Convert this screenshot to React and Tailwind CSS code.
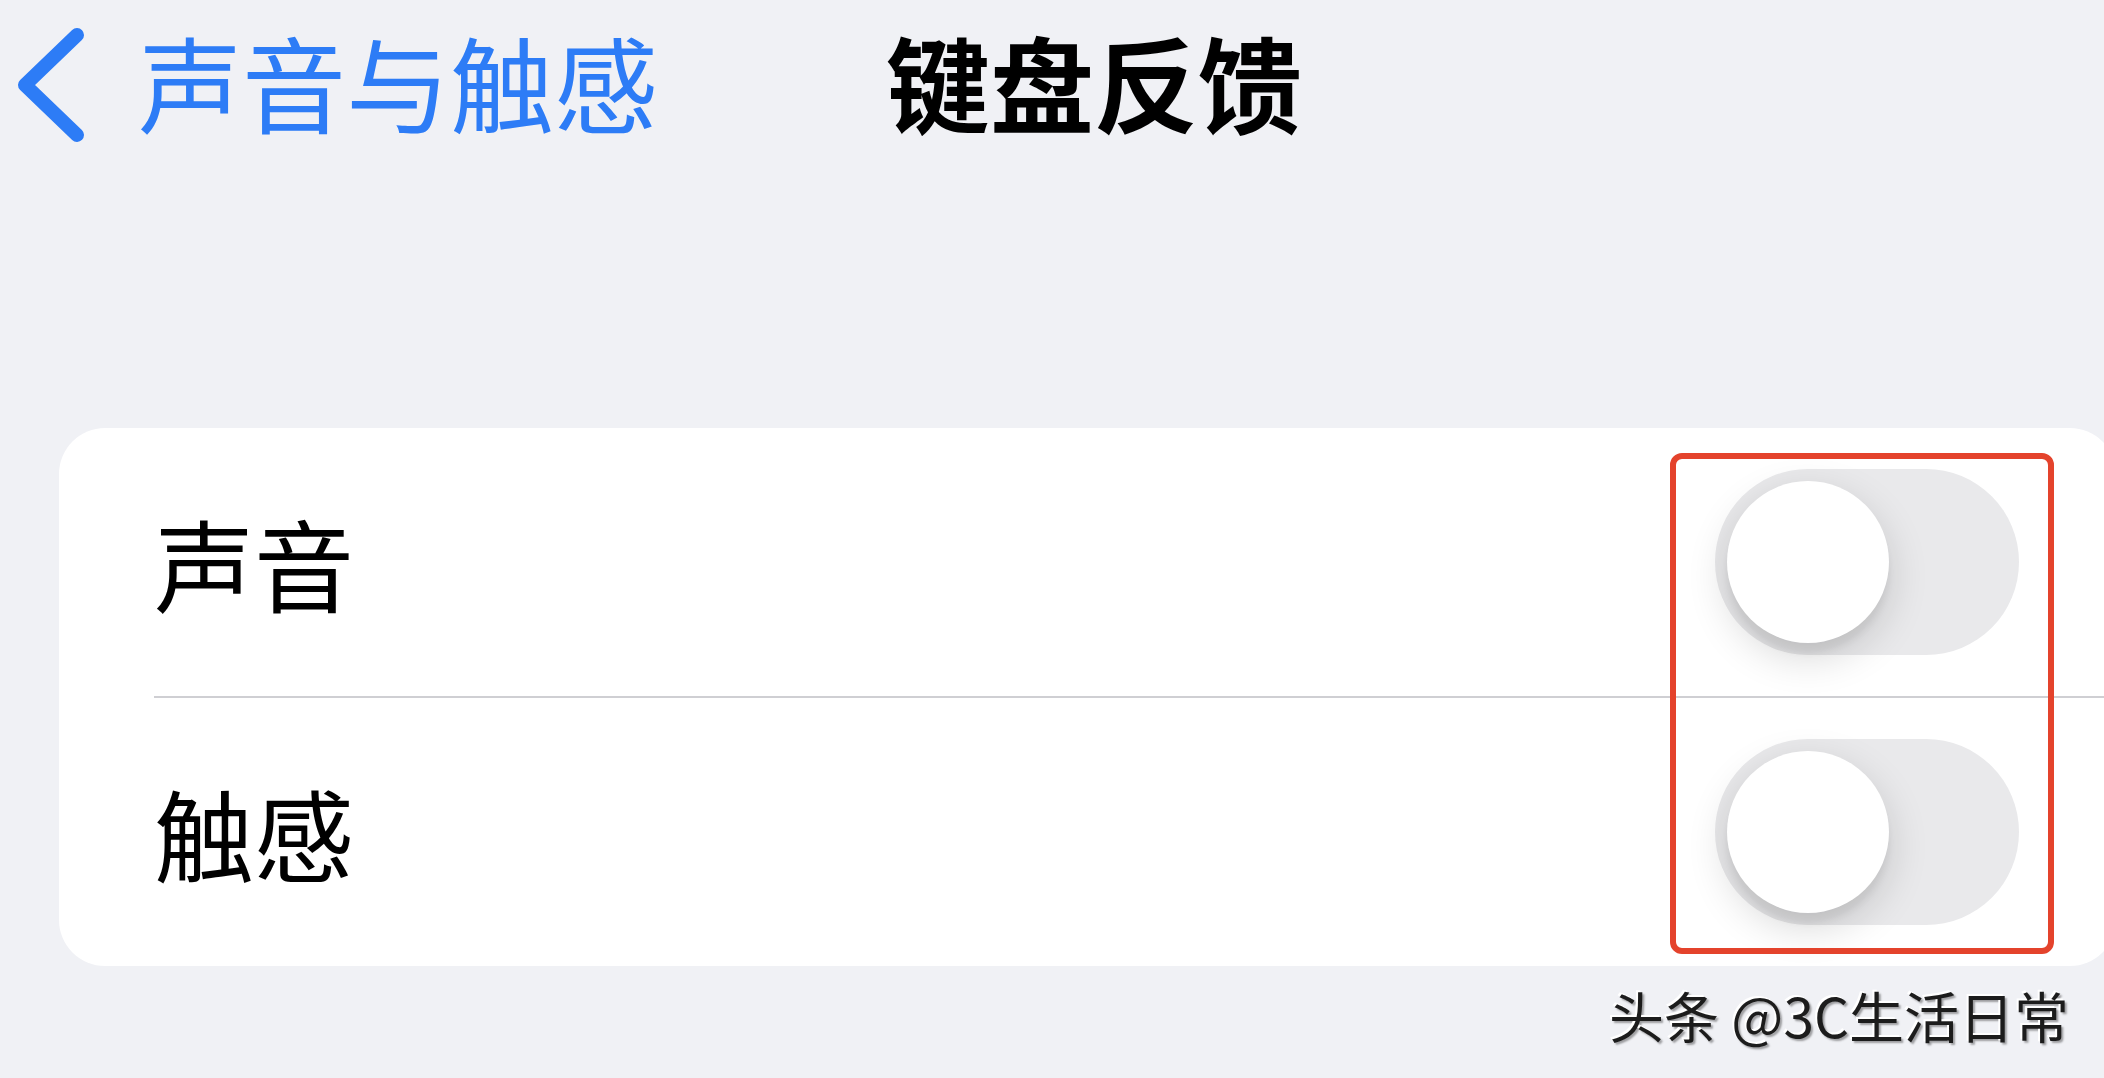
import React, { useState } from "react";

const Toggle = ({ on, onChange }) => {
    return (
        <button
            onClick={onChange}
            className={`w-[304px] h-[186px] rounded-full p-[12px] flex items-center shrink-0 ${on ? "bg-[#34c759] justify-end" : "bg-[#e9e9eb] justify-start"}`}
        >
            <span className="block w-[162px] h-[162px] rounded-full bg-white shadow-[0_14px_40px_rgba(0,0,0,0.16),0_10px_6px_rgba(0,0,0,0.05)]" />
        </button>
    );
};

const App = () => {

    const [sound, setSound] = useState(false);
    const [haptic, setHaptic] = useState(false);

    return (
        <div className="relative w-[2104px] h-[1078px] overflow-hidden bg-[#f0f1f5] font-['Noto_Sans_CJK_SC','Noto_Sans',sans-serif]">
            {/* nav bar */}
            <div className="h-[170px] flex items-center pl-[18px]">
                <svg width="66" height="114" viewBox="0 0 66 114" fill="none">
                    <path d="M59 7 L7 57 L59 107" stroke="#2d7cf6" strokeWidth="14" strokeLinecap="round" strokeLinejoin="round" />
                </svg>
                <span className="ml-[54px] mb-[8px] text-[104px] leading-none text-[#2d7cf6]">声音与触感</span>
                <span className="ml-[228px] mb-[8px] text-[104px] leading-none font-bold text-black">键盘反馈</span>
            </div>

            {/* settings card */}
            <div className="mt-[258px] ml-[59px] w-[2057px] rounded-[46px] bg-white">
                <div className="h-[268px] flex items-center justify-between pl-[95px] pr-[97px]">
                    <span className="text-[100px] leading-none text-black">声音</span>
                    <Toggle on={sound} onChange={() => setSound(!sound)} />
                </div>
                <div className="ml-[95px] h-[2px] bg-[#cfcfd3]" />
                <div className="h-[268px] flex items-center justify-between pl-[95px] pr-[97px]">
                    <span className="text-[100px] leading-none text-black">触感</span>
                    <Toggle on={haptic} onChange={() => setHaptic(!haptic)} />
                </div>
            </div>

            {/* watermark */}
            <div className="mt-[21px] flex justify-end pr-[35px]">
                <span className="text-[55px] leading-none text-[#1c1c1c] [text-shadow:-2px_-2px_0_#ffffff,2px_2px_2px_rgba(0,0,0,0.35)]">头条 @3C生活日常</span>
            </div>

            {/* annotation box */}
            <div className="absolute left-[1670px] top-[453px] w-[384px] h-[501px] border-[6px] border-[#e4432c] rounded-[12px]" />
        </div>
    );
};

export default App;
